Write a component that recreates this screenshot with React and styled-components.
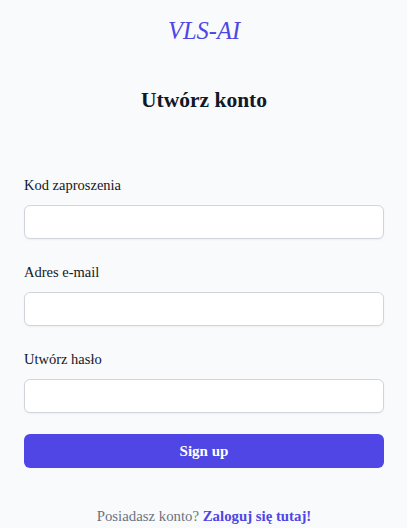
import React from "react"
import styled, { createGlobalStyle } from "styled-components"

const GlobalStyle = createGlobalStyle`
  html, body {
    margin: 0;
    padding: 0;
    background: #f9fafb;
    font-family: "Liberation Serif", "Times New Roman", serif;
    color: #111827;
  }
`

const Page = styled.main`
  min-height: 528px;
  display: flex;
  flex-direction: column;
  padding: 0 23px 0 24px;
  box-sizing: border-box;
`

const Brand = styled.h1`
  margin: 17px 0 0;
  text-align: center;
  font-size: 24.5px;
  line-height: 28px;
  font-style: italic;
  font-weight: 400;
  color: #4f46e5;
`

const Heading = styled.h2`
  margin: 41px 0 0;
  text-align: center;
  font-size: 21.5px;
  line-height: 28px;
  font-weight: 700;
  color: #111827;
`

const Form = styled.form`
  margin-top: 59px;
  display: flex;
  flex-direction: column;
  gap: 21px;
`

const Field = styled.div`
  display: flex;
  flex-direction: column;
  gap: 8px;
`

const Label = styled.label`
  font-size: 14.5px;
  line-height: 24px;
  color: #111827;
`

const Input = styled.input`
  height: 34px;
  box-sizing: border-box;
  border: 1px solid #d1d5db;
  border-radius: 6px;
  background: #fff;
  box-shadow: 0 1px 2px rgba(0, 0, 0, 0.05);
  padding: 6px 12px;
  font: inherit;
  font-size: 14px;
  outline: none;
`

const Button = styled.button`
  height: 34px;
  border: none;
  border-radius: 6px;
  background: #4f46e5;
  color: #fff;
  font-family: inherit;
  font-size: 15px;
  font-weight: 700;
  cursor: pointer;
`

const Footer = styled.p`
  margin: 36px 0 0;
  text-align: center;
  font-size: 14.8px;
  line-height: 24px;
  color: #6b7280;
`

const LoginLink = styled.a`
  font-weight: 700;
  color: #4f46e5;
  text-decoration: none;
`

const fields = [
  { id: "invite", label: "Kod zaproszenia", type: "text" },
  { id: "email", label: "Adres e-mail", type: "email" },
  { id: "password", label: "Utwórz hasło", type: "password" },
]

export default function App() {
  return (
    <>
      <GlobalStyle />
      <Page>
        <Brand>VLS-AI</Brand>
        <Heading>Utwórz konto</Heading>
        <Form onSubmit={e => e.preventDefault()}>
          {fields.map(f => (
            <Field key={f.id}>
              <Label htmlFor={f.id}>{f.label}</Label>
              <Input id={f.id} type={f.type} />
            </Field>
          ))}
          <Button type="submit">Sign up</Button>
        </Form>
        <Footer>
          Posiadasz konto? <LoginLink href="#">Zaloguj się tutaj!</LoginLink>
        </Footer>
      </Page>
    </>
  )
}
